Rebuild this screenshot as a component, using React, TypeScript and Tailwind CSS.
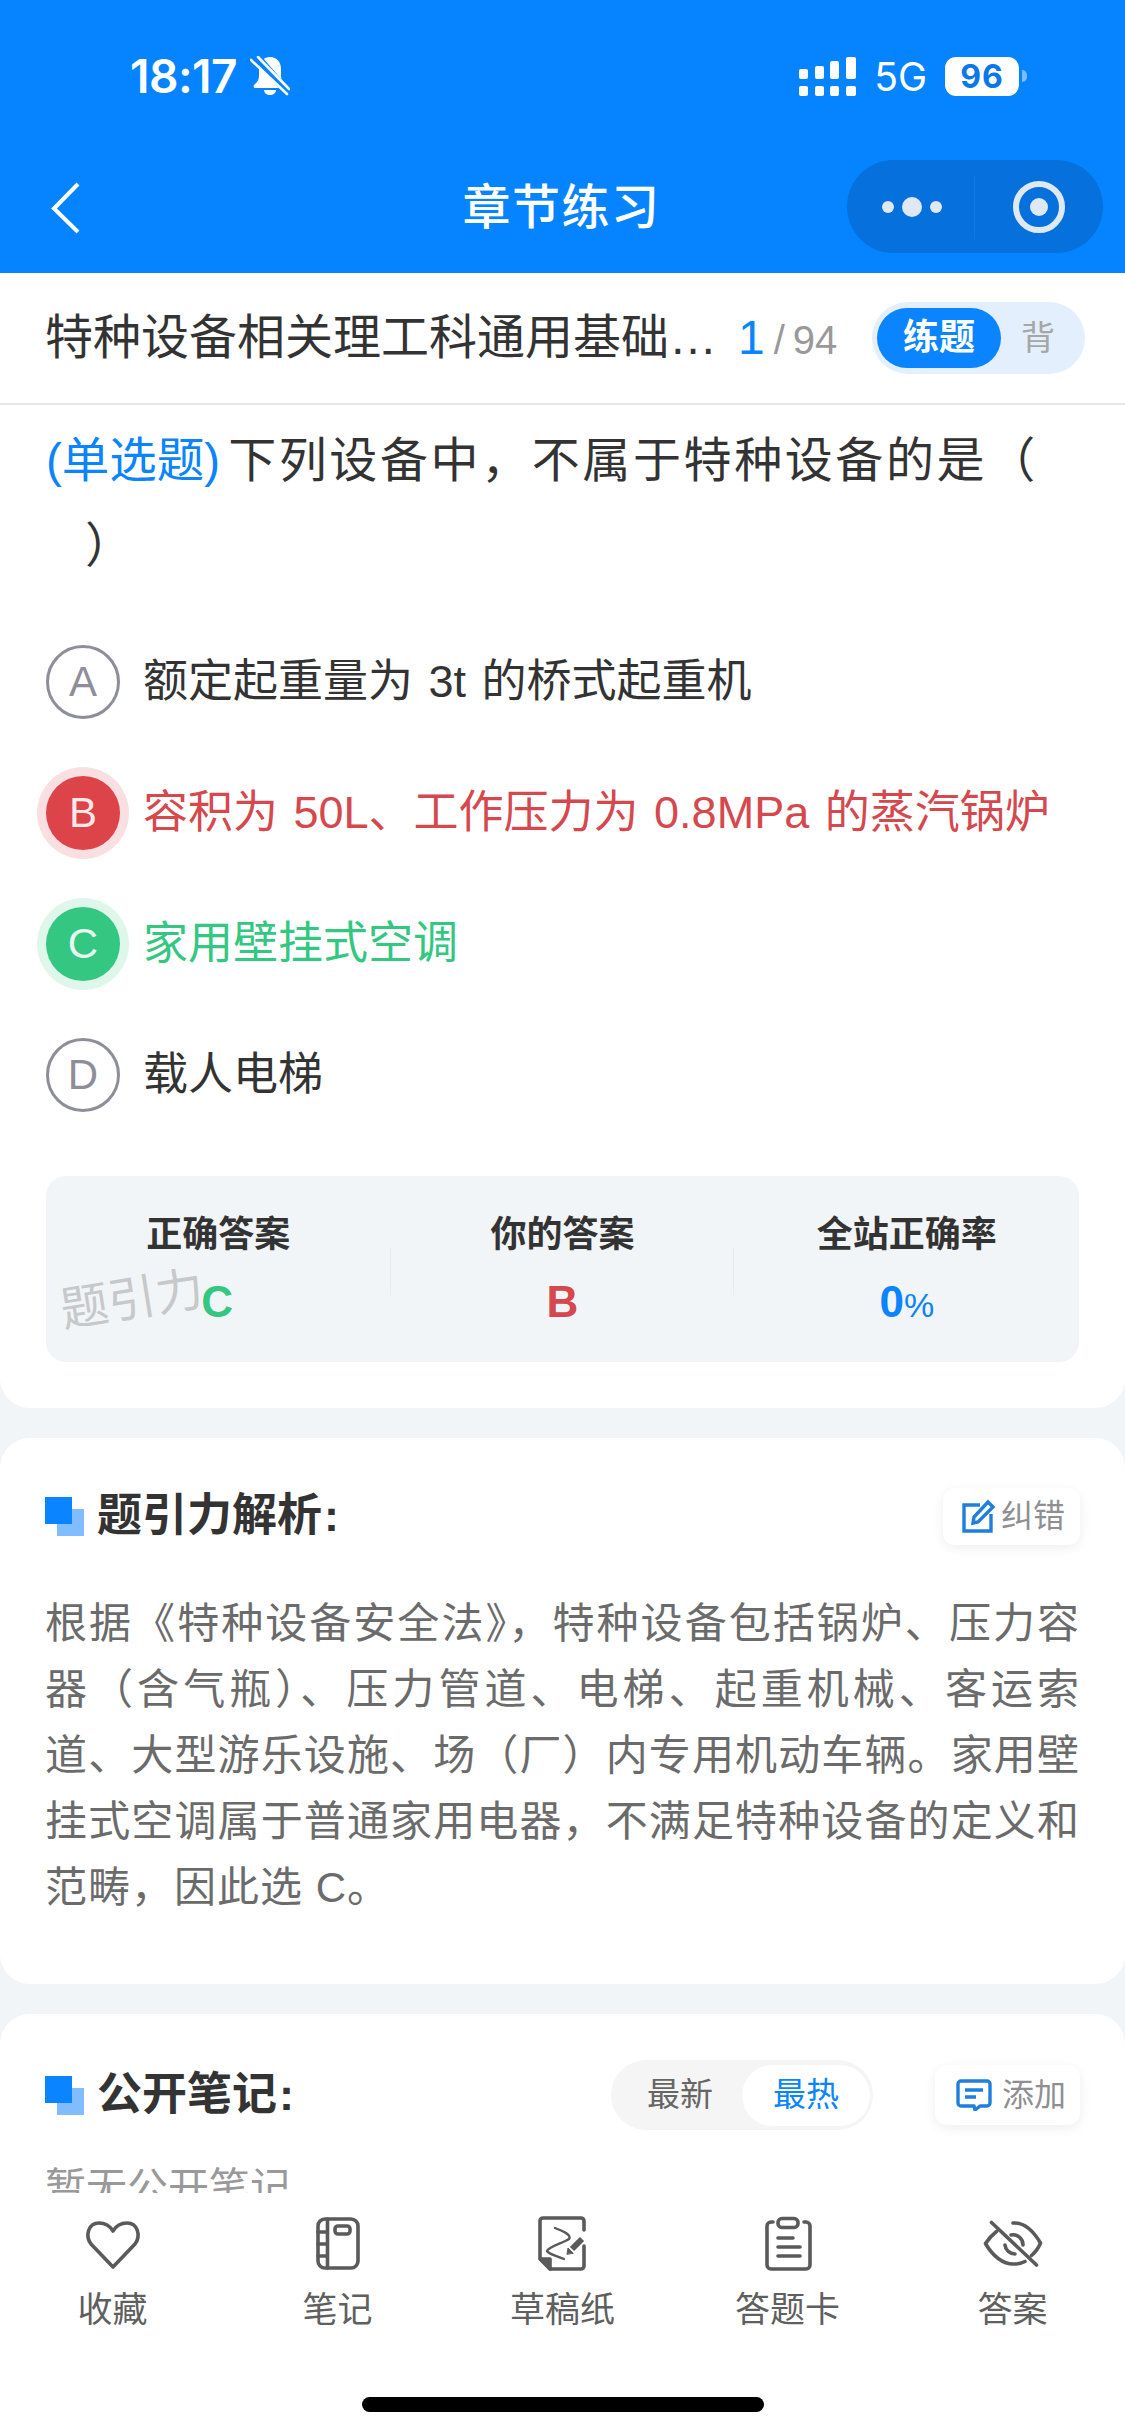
import React from "react";

const INK = "#5a5a5a";

function Squares() {
  return (
    <span className="relative block w-[39px] h-[39px] shrink-0">
      <span className="absolute left-[12px] top-[12px] w-[27px] h-[27px] bg-[#80bdff]" />
      <span className="absolute left-0 top-0 w-[27px] h-[27px] bg-[#0a84ff]" />
    </span>
  );
}

function Option({ letter, text, tone }: { letter: string; text: string; tone?: "red" | "green" }) {
  const circle =
    tone === "red"
      ? "bg-[#dc4449] text-[#fbe9ea] shadow-[0_0_0_9px_#f9dfe1]"
      : tone === "green"
        ? "bg-[#33c781] text-[#e6f8ef] shadow-[0_0_0_9px_#dff6ea]"
        : "border-[3px] border-[#8e8e99] text-[#8e8e99]";
  const color = tone === "red" ? "text-[#d4484e]" : tone === "green" ? "text-[#33c781]" : "text-[#333333]";
  return (
    <div className="flex items-center h-[131px]">
      <div className={`w-[74px] h-[74px] rounded-full flex items-center justify-center text-[42px] shrink-0 ${circle}`}>{letter}</div>
      <div className={`ml-[23px] text-[45px] whitespace-nowrap [word-spacing:3px] ${color}`}>{text}</div>
    </div>
  );
}

function Stat({ label, children }: { label: string; children: React.ReactNode }) {
  return (
    <div className="flex flex-col items-center pt-[34px]">
      <div className="h-[50px] leading-[50px] text-[36px] font-bold text-[#333333]">{label}</div>
      <div className="mt-[12px] h-[60px] leading-[60px] font-bold">{children}</div>
    </div>
  );
}

function TabItem({ icon, label }: { icon: React.ReactNode; label: string }) {
  return (
    <div className="flex flex-col items-center pt-[20px]">
      <svg width="60" height="60" viewBox="0 0 60 60" fill="none" stroke={INK} strokeWidth="3.6" strokeLinecap="round" strokeLinejoin="round">
        {icon}
      </svg>
      <div className="mt-[12px] h-[50px] leading-[50px] text-[35px] text-[#5f5f5f]">{label}</div>
    </div>
  );
}

const bodyLines = [
  "根据《特种设备安全法》，特种设备包括锅炉、压力容",
  "器（含气瓶）、压力管道、电梯、起重机械、客运索",
  "道、大型游乐设施、场（厂）内专用机动车辆。家用壁",
  "挂式空调属于普通家用电器，不满足特种设备的定义和",
];

export default function App() {
  return (
    <div className="w-[1125px] h-[2436px] flex flex-col overflow-hidden bg-white font-['Liberation_Sans','Noto_Sans_CJK_SC',sans-serif]">
      {/* Blue header */}
      <header className="h-[273px] shrink-0 bg-[#0684ff] text-white">
        <div className="h-[152px] flex items-center justify-between pl-[130px] pr-[98px]">
          <div className="flex items-center font-['Inter',sans-serif]">
            <span className="text-[46px] font-semibold tracking-[-0.5px]">18:17</span>
            <svg className="ml-[13px]" width="40" height="40" viewBox="0 0 40 40">
              <path d="M20 1c-7 0-11 5-11 12v7c0 4-2 6-5 9-1 2 0 3 2 3h28c2 0 3-1 2-3-3-3-5-5-5-9v-7C31 6 27 1 20 1z" fill="#fff" />
              <path d="M14 34h12c0 3-3 5-6 5s-6-2-6-5z" fill="#fff" />
              <path d="M6 0 38 37" stroke="#0684ff" strokeWidth="8" />
              <path d="M1 4 37 38M8 1 39 33" stroke="#fff" strokeWidth="2.6" strokeLinecap="round" />
            </svg>
          </div>
          <div className="flex items-center font-['Inter',sans-serif]">
            <svg width="57" height="39" viewBox="0 0 57 39" fill="#fff">
              <rect x="0" y="12" width="9" height="10" rx="2" />
              <rect x="16" y="9" width="9" height="13" rx="2" />
              <rect x="31" y="4" width="9" height="18" rx="2" />
              <rect x="47" y="0" width="10" height="22" rx="2" />
              <rect x="0" y="29" width="9" height="10" rx="2" />
              <rect x="16" y="29" width="9" height="10" rx="2" />
              <rect x="31" y="29" width="9" height="10" rx="2" />
              <rect x="47" y="29" width="10" height="10" rx="2" />
            </svg>
            <span className="ml-[18px] text-[39px] leading-none">5G</span>
            <span className="ml-[18px] w-[74px] h-[39px] rounded-[11px] bg-white text-[#0a78e8] text-[32px] font-bold leading-[39px] text-center tracking-[1px]">96</span>
            <span className="ml-[3px] w-[5px] h-[12px] rounded-r-full bg-[#7dbdfb]" />
          </div>
        </div>
        <div className="relative h-[111px] flex items-center justify-center">
          <svg className="absolute left-[50px] top-[30px]" width="30" height="52" viewBox="0 0 30 52" fill="none" stroke="#fff" strokeWidth="4">
            <path d="M28 2 4 26.500 28 50" />
          </svg>
          <h1 className="text-[48px] font-medium tracking-[1.5px] ml-[-2px]">章节练习</h1>
          <div className="absolute left-[847px] top-[8px] w-[256px] h-[93px] rounded-full bg-[#0670dd] flex items-center">
            <div className="w-[128px] h-[64px] flex items-center justify-center gap-[8px] border-r border-[#1079e3] pl-[2px]">
              <span className="w-[12px] h-[12px] rounded-full bg-[#dfe9f5]" />
              <span className="w-[20px] h-[20px] rounded-full bg-[#dfe9f5]" />
              <span className="w-[12px] h-[12px] rounded-full bg-[#dfe9f5]" />
            </div>
            <div className="flex-1 flex items-center justify-center">
              <div className="w-[52px] h-[52px] rounded-full border-[6px] border-[#dfe9f5] flex items-center justify-center">
                <span className="w-[18px] h-[18px] rounded-full bg-[#dfe9f5]" />
              </div>
            </div>
          </div>
        </div>
      </header>

      {/* Scroll area */}
      <main className="flex-1 min-h-0 overflow-hidden bg-[#f2f5f8]">
        <section className="bg-white rounded-b-[30px] pb-[46px]">
          <div className="h-[132px] flex items-center pl-[45px] pr-[40px] border-b-2 border-[#e6e6e6]">
            <div className="w-[676px] whitespace-nowrap text-[48px] text-[#333333]">特种设备相关理工科通用基础…</div>
            <div className="ml-[17px] flex items-baseline">
              <span className="text-[48px] text-[#0a84ff]">1</span>
              <span className="ml-[9px] text-[40px] text-[#999999]">/</span>
              <span className="ml-[8px] text-[40px] text-[#999999]">94</span>
            </div>
            <div className="ml-auto w-[213px] h-[72px] rounded-full bg-[#e3effc] flex items-center pl-[5px]">
              <div className="w-[124px] h-[60px] rounded-full bg-[#0a84ff] text-white text-[36px] font-bold flex items-center justify-center">练题</div>
              <div className="ml-[20px] text-[34px] text-[#a6a6a6]">背</div>
            </div>
          </div>

          <div className="px-[46px]">
            <div className="pt-[13px] text-[48px] leading-[85px] text-[#333333] whitespace-nowrap">
              <span className="text-[47.5px] text-[#0a84ff]">(单选题)</span>
              <span className="ml-[8px] tracking-[2.6px]">下列设备中，不属于特种设备的是（</span>
            </div>
            <div className="pl-[39px] text-[48px] leading-[85px] text-[#333333]">）</div>

            <div className="mt-[28px]">
              <Option letter="A" text="额定起重量为 3t 的桥式起重机" />
              <Option letter="B" text="容积为 50L、工作压力为 0.8MPa 的蒸汽锅炉" tone="red" />
              <Option letter="C" text="家用壁挂式空调" tone="green" />
              <Option letter="D" text="载人电梯" />
            </div>

            <div className="relative mt-[36px] h-[186px] rounded-[20px] bg-[#f2f5f8] grid grid-cols-3">
              <Stat label="正确答案"><span className="ml-[-2px] text-[44px] text-[#33c781]">C</span></Stat>
              <Stat label="你的答案"><span className="text-[44px] text-[#d4484e]">B</span></Stat>
              <Stat label="全站正确率">
                <span className="text-[44px] text-[#0a84ff]">0</span>
                <span className="text-[34px] font-normal text-[#0a84ff]">%</span>
              </Stat>
              <span className="absolute left-[344px] top-[72px] w-[1px] h-[47px] bg-[#e8ebef]" />
              <span className="absolute left-[687px] top-[72px] w-[1px] h-[47px] bg-[#e8ebef]" />
              <span className="absolute left-[14px] top-[94px] text-[48px] leading-[60px] text-[#c6c8ca] -rotate-[9deg] whitespace-nowrap">题引力</span>
            </div>
          </div>
        </section>

        <section className="mt-[30px] h-[546px] bg-white rounded-[30px] pt-[48px] px-[45px]">
          <div className="h-[60px] flex items-center justify-between">
            <div className="flex items-center">
              <Squares />
              <span className="ml-[13px] text-[45px] font-bold text-[#333333]">题引力解析</span>
              <span className="ml-[2px] text-[45px] font-bold text-[#333333]">:</span>
            </div>
            <div className="w-[137px] h-[57px] rounded-[12px] bg-white shadow-[0_3px_12px_rgba(0,0,0,0.07)] flex items-center pl-[19px] gap-[5px]">
              <svg width="34" height="34" viewBox="0 0 34 34" fill="none" stroke="#1f7fdc" strokeWidth="3.4">
                <path d="M18 6H2v26h27V15" />
                <path d="M11 24l1-6L26 3l5 5-15 15z" />
              </svg>
              <span className="text-[32px] text-[#8e8e93]">纠错</span>
            </div>
          </div>
          <div className="mt-[45px] text-[42px] leading-[66px] tracking-[1px] text-[#6b6b6b]">
            {bodyLines.map((l) => (
              <div key={l} className="whitespace-nowrap text-justify [text-align-last:justify]">{l}</div>
            ))}
            <div>范畴，因此选 C。</div>
          </div>
        </section>

        <section className="mt-[30px] bg-white rounded-t-[30px] pt-[46px] px-[45px]">
          <div className="h-[70px] flex items-center">
            <Squares />
            <span className="ml-[13px] text-[45px] font-bold text-[#333333]">公开笔记</span>
            <span className="ml-[2px] text-[45px] font-bold text-[#333333]">:</span>
            <div className="ml-auto w-[262px] h-[70px] rounded-full bg-[#f5f5f5] flex items-center pl-[36px] pr-[3px]">
              <span className="text-[33px] text-[#666666]">最新</span>
              <span className="ml-auto w-[128px] h-[61px] rounded-full bg-white text-[33px] text-[#0a84ff] flex items-center justify-center">最热</span>
            </div>
            <div className="ml-[62px] w-[145px] h-[60px] rounded-[12px] bg-white shadow-[0_3px_12px_rgba(0,0,0,0.07)] flex items-center pl-[21px] gap-[10px]">
              <svg width="36" height="32" viewBox="0 0 36 32" fill="none" stroke="#1f7fdc" strokeWidth="3.4" strokeLinejoin="round">
                <path d="M5 2h26a3 3 0 0 1 3 3v19a3 3 0 0 1-3 3h-7l-5 4-1-4H5a3 3 0 0 1-3-3V5a3 3 0 0 1 3-3z" />
                <path d="M9 11h18M9 18h11" />
              </svg>
              <span className="text-[32px] text-[#8e8e93]">添加</span>
            </div>
          </div>
          <div className="mt-[28px] text-[41px] leading-[60px] text-[#999999]">暂无公开笔记</div>
        </section>
      </main>

      {/* Bottom bar */}
      <footer className="h-[243px] shrink-0 bg-white relative">
        <div className="grid grid-cols-5">
          <TabItem
            label="收藏"
            icon={<path d="M30 54 8 31C2 23 5 10 16 10c6 0 11 3 14 8 3-5 8-8 14-8 11 0 14 13 8 21z" />}
          />
          <TabItem
            label="笔记"
            icon={
              <>
                <rect x="10" y="6" width="40" height="49" rx="7" />
                <path d="M19.500 6v49M10 19h9.500M10 31h9.500M10 43h9.500" />
                <rect x="27" y="13" width="15" height="8" rx="3" />
              </>
            }
          />
          <TabItem
            label="草稿纸"
            icon={
              <>
                <path d="M51 17V8a3 3 0 0 0-3-3H10a3 3 0 0 0-3 3v38l10 10h31a3 3 0 0 0 3-3V33" />
                <path d="M8 46h9v10z" fill={INK} />
                <path d="M22 15c8 3 17 7 14 11-6 4-21 8-22 12 1 3 11 5 17 8" strokeWidth="2.4" />
                <path d="M39 36 49 26" strokeWidth="6" strokeLinecap="butt" />
                <path d="M34 41l1-6 5 5z" fill={INK} strokeWidth="1" />
              </>
            }
          />
          <TabItem
            label="答题卡"
            icon={
              <>
                <rect x="20" y="5.500" width="20" height="9" rx="4" />
                <path d="M15 9h-2a4 4 0 0 0-4 4v39a4 4 0 0 0 4 4h35a4 4 0 0 0 4-4V13a4 4 0 0 0-4-4h-2" />
                <path d="M20 25h15M20 34h22M20 43h22" />
              </>
            }
          />
          <TabItem
            label="答案"
            icon={
              <>
                <path d="M8.500 9.500 53.500 52" />
                <path d="M30 10c12-1 21 9 27.500 20-2 5-5 9-9 12.500" />
                <path d="M13.500 18.500C9 22 5.500 26 2.500 30.500 9 42 20 52 32 51c4 0 7-1 10-2.500" />
                <path d="M28 22a10 10 0 0 1 12 10M22 32a10 10 0 0 0 10 9" />
              </>
            }
          />
        </div>
        <div className="absolute left-[362px] top-[204px] w-[402px] h-[15px] rounded-full bg-black" />
      </footer>
    </div>
  );
}
